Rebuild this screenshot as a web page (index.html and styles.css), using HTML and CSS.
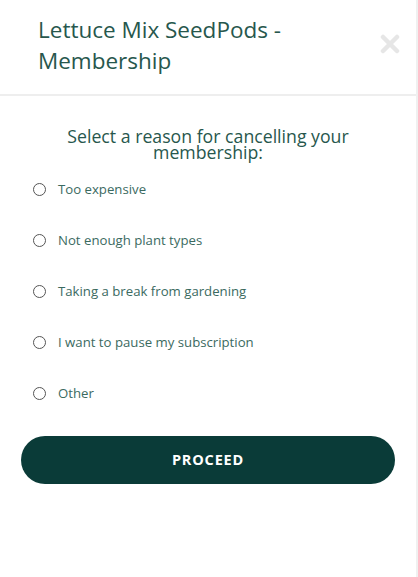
FILE: index.html
```html
<!DOCTYPE html>
<html>
<head>
<meta charset="utf-8">
<link rel="stylesheet" href="styles.css">
</head>
<body>
<div class="modal">
  <header class="head">
    <h1 class="title">Lettuce Mix SeedPods -<br>Membership</h1>
    <button class="close" aria-label="Close">
      <svg width="20" height="20" viewBox="0 0 20 20"><path d="M3 3 L17 17 M17 3 L3 17" stroke="#e6e6e6" stroke-width="4.5" stroke-linecap="round"/></svg>
    </button>
  </header>
  <main class="body">
    <h2 class="question">Select a reason for cancelling your<br>membership:</h2>
    <ul class="options">
      <li class="option"><span class="radio"></span><span class="label">Too expensive</span></li>
      <li class="option"><span class="radio"></span><span class="label">Not enough plant types</span></li>
      <li class="option"><span class="radio"></span><span class="label">Taking a break from gardening</span></li>
      <li class="option"><span class="radio"></span><span class="label">I want to pause my subscription</span></li>
      <li class="option"><span class="radio"></span><span class="label">Other</span></li>
    </ul>
    <button class="proceed">PROCEED</button>
  </main>
</div>
</body>
</html>
```
FILE: styles.css
```css
html, body {
  margin: 0;
  padding: 0;
  background: #fff;
}
.modal {
  width: 416px;
  height: 577px;
  border-right: 2px solid #f0f0f0;
  font-family: "Open Sans", "Liberation Sans", sans-serif;
  color: #28574d;
}
.head {
  height: 96px;
  border-bottom: 2px solid #eeeeee;
  display: flex;
  align-items: flex-start;
  justify-content: space-between;
  box-sizing: border-box;
  padding: 14px 16px 0 38px;
}
.title {
  margin: 0;
  font-weight: 400;
  font-size: 22.5px;
  line-height: 31px;
  color: #27574d;
}
.close {
  border: 0;
  background: none;
  padding: 0;
  margin-top: 20px;
  width: 20px;
  height: 20px;
}
.body {
  padding: 0 21px;
}
.question {
  margin: 33px 0 0 0;
  text-align: center;
  font-weight: 400;
  font-size: 17.7px;
  line-height: 15.5px;
  color: #27574d;
}
.options {
  list-style: none;
  margin: 19px 0 0 0;
  padding: 0 0 0 12px;
  display: flex;
  flex-direction: column;
  gap: 31px;
}
.option {
  display: flex;
  align-items: center;
  height: 20px;
}
.radio {
  width: 11px;
  height: 11px;
  border: 1.3px solid #555;
  border-radius: 50%;
  flex: none;
}
.label {
  margin-left: 12px;
  font-size: 13.2px;
  color: #3b6a5f;
}
.proceed {
  display: block;
  margin-top: 33px;
  width: 374px;
  height: 48px;
  border: 0;
  border-radius: 24px;
  background: #0a3b38;
  color: #fff;
  font-family: "Open Sans", "Liberation Sans", sans-serif;
  font-weight: 700;
  font-size: 14.5px;
  letter-spacing: 0.8px;
  padding-bottom: 2px;
}
```
